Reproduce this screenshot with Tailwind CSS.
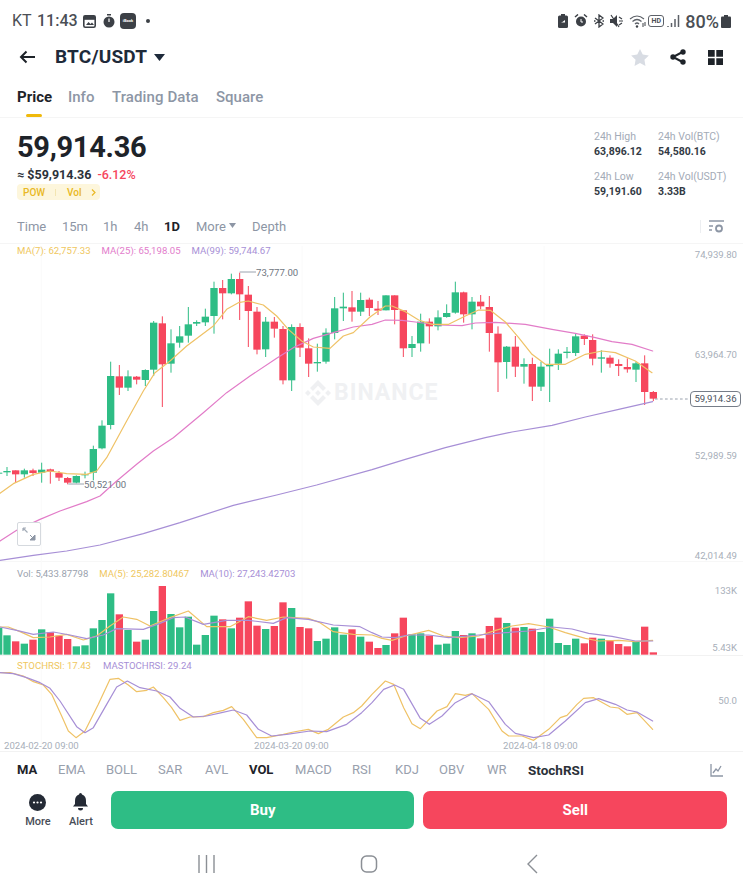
<!DOCTYPE html>
<html lang="en">
<head>
    <meta charset="UTF-8">
    <meta name="viewport" content="width=device-width, initial-scale=1.0">
    <title>BTC/USDT</title>
    <script src="https://cdn.jsdelivr.net/npm/@tailwindcss/browser@4"></script>
</head>
<body class="bg-white text-[#1e2329] font-['Roboto',sans-serif] w-[743px] h-[892px] overflow-hidden">

    <!-- status bar -->
    <div class="h-[42px] flex items-center justify-between pl-[12px] pr-[12px] text-[#4b4f55]">
        <div class="flex items-center">
            <span class="text-[16px] w-[25px]">KT</span>
            <span class="text-[16px] font-medium w-[46px]">11:43</span>
            <svg class="w-[13px] h-[13px]" viewBox="0 0 13 13"><rect x="0.8" y="0.8" width="11.4" height="11.4" rx="1.5" fill="none" stroke="#3c4046" stroke-width="1.6"/><rect x="0.8" y="0.8" width="11.4" height="4" fill="#3c4046"/><path d="M3 10l2.5-3 2 2 1.5-1.5 2 2.5z" fill="#3c4046"/></svg>
            <svg class="w-[12px] h-[14px] ml-[7px]" viewBox="0 0 12 14"><rect x="4" y="0" width="4" height="1.5" fill="#3c4046"/><circle cx="6" cy="8" r="5.5" fill="#3c4046"/><path d="M6 8V4.5" stroke="#fff" stroke-width="1.2"/></svg>
            <span class="ml-[5px] w-[16px] h-[16px] rounded-[4px] bg-[#3c4046] text-white text-[4px] font-bold flex items-center justify-center">iBook</span>
            <span class="ml-[10px] w-[4px] h-[4px] rounded-full bg-[#3c4046]"></span>
        </div>
        <div class="flex items-center">
            <svg class="w-[10px] h-[14px]" viewBox="0 0 10 14"><rect x="3" y="0" width="4" height="2" fill="#3c4046"/><rect x="0" y="1.5" width="10" height="12.5" rx="1.5" fill="#3c4046"/><path d="M3 9l4-3v2.5H3z" fill="#fff"/></svg>
            <svg class="w-[14px] h-[14px] ml-[6px]" viewBox="0 0 14 14"><circle cx="7" cy="7.5" r="5" fill="#3c4046"/><path d="M1 3l3-2.5M13 3l-3-2.5" stroke="#3c4046" stroke-width="1.5"/><path d="M7 5v3h2" stroke="#fff" stroke-width="1" fill="none"/></svg>
            <svg class="w-[10px] h-[14px] ml-[6px]" viewBox="0 0 10 14"><path d="M1 4l8 6-4 3V1l4 3-8 6M0 7h1.5M8.5 7H10" stroke="#3c4046" stroke-width="1.3" fill="none"/></svg>
            <svg class="w-[13px] h-[14px] ml-[6px]" viewBox="0 0 13 14"><path d="M0 5h3l4-4v12l-4-4H0z" fill="#3c4046"/><path d="M9 3l3 2M9 7h4M9 11l3-2M1 1l8 12" stroke="#3c4046" stroke-width="1.2"/></svg>
            <svg class="w-[18px] h-[14px] ml-[6px]" viewBox="0 0 18 14"><path d="M1 5q7-6 14 0M3.5 7.5q4.500-4 9 0M6 10q2-2 4 0" stroke="#5d6168" stroke-width="1.2" fill="none"/><circle cx="8" cy="12.500" r="1.200" fill="#3c4046"/><path d="M14 9v4M16 8v4" stroke="#3c4046"/></svg>
            <span class="ml-[1px] w-[16px] h-[12px] border border-[#5d6168] rounded-[3px] text-[7px] font-bold leading-[10px] text-center text-[#4b4f55]">HD</span>
            <svg class="w-[13px] h-[14px] ml-[3px]" viewBox="0 0 13 14"><path d="M1 13v-1M4.500 13V9M8 13V5M11.500 13V1" stroke="#5d6168" stroke-width="1.500"/></svg>
            <span class="text-[18px] font-medium ml-[5px]">80%</span>
            <svg class="w-[10px] h-[13px] ml-[2px]" viewBox="0 0 10 13"><rect x="3" y="0" width="4" height="2" fill="#3c4046"/><rect x="0" y="1.500" width="10" height="11.500" rx="1" fill="#3c4046"/></svg>
        </div>
    </div>

    <!-- header -->
    <div class="h-[30px] flex items-center pl-[19px] pr-[20px]">
        <svg class="w-[17px] h-[14px]" viewBox="0 0 17 14"><path d="M16 7H2M7.500 1.500L2 7l5.500 5.500" fill="none" stroke="#1e2329" stroke-width="2"/></svg>
        <span class="ml-[19px] text-[19px] font-bold text-[#1e2a3a] tracking-[0.2px]">BTC/USDT</span>
        <svg class="ml-[7px] w-[11px] h-[7px]" viewBox="0 0 11 7"><path d="M0 0h11L5.500 7z" fill="#1e2a3a"/></svg>
        <div class="ml-auto flex items-center">
            <svg class="w-[18px] h-[17px]" viewBox="0 0 24 23"><path d="M12 0l3.700 7.600 8.300 1.200-6 5.900 1.400 8.300L12 19.100 4.600 23 6 14.700 0 8.800l8.300-1.200z" fill="#d8dce3"/></svg>
            <svg class="ml-[21px] w-[16px] h-[16px]" viewBox="0 0 16 16"><path d="M12.500 3L3 8l9.500 5" fill="none" stroke="#1e2329" stroke-width="2"/><circle cx="13" cy="3" r="2.700" fill="#1e2329"/><circle cx="3" cy="8" r="2.700" fill="#1e2329"/><circle cx="13" cy="13" r="2.700" fill="#1e2329"/></svg>
            <svg class="ml-[22px] w-[15px] h-[15px]" viewBox="0 0 15 15"><path d="M0 0h6.700v6.700H0zM8.300 0H15v6.700H8.300zM0 8.300h6.700V15H0zM8.300 8.300H15V15H8.300z" fill="#1e2329"/></svg>
        </div>
    </div>

    <!-- tabs -->
    <div class="h-[46px] border-b border-[#f5f5f5] relative flex items-start pt-[14px] pl-[17px] text-[15px] font-medium text-[#8d96a5]">
        <span class="text-[#1e2329] font-bold w-[51px]">Price</span>
        <span class="w-[44px]">Info</span>
        <span class="w-[104px] tracking-[0.1px]">Trading Data</span>
        <span>Square</span>
        <span class="absolute left-[26px] bottom-0 w-[16px] h-[3px] rounded-sm bg-[#f0b90b]"></span>
    </div>

    <!-- price summary -->
    <div class="h-[92px] flex justify-between">
        <div class="pl-[17px] pt-[10px]">
            <div class="text-[29px] leading-[38px] font-bold tracking-[-0.3px]">59,914.36</div>
            <div class="mt-[1px] flex items-center text-[12.500px] leading-[16px] font-bold">
                <span class="text-[#2b3139]">≈ $59,914.36</span>
                <span class="ml-[6px] text-[#f6465d] font-medium">-6.12%</span>
            </div>
            <div class="mt-[1px] w-[83px] h-[16px] bg-[#fdf6dc] rounded-sm flex items-center text-[10px] text-[#e9b824] font-medium pl-[6px]">
                <span class="w-[24px]">POW</span>
                <span class="w-[1px] h-[7px] bg-[#f3e5b0] ml-[8px]"></span>
                <span class="ml-[11px]">Vol</span>
                <svg class="ml-[10px] w-[5px] h-[7px]" viewBox="0 0 5 7"><path d="M1 .5l3 3-3 3" fill="none" stroke="#e9b824" stroke-width="1.200"/></svg>
            </div>
        </div>
        <div class="flex pt-[11px] text-[10.500px] leading-[15px]">
            <div class="w-[64px]">
                <div class="text-[#a3abb7]">24h High</div>
                <div class="font-bold text-[#333a44]">63,896.12</div>
                <div class="mt-[10px] text-[#a3abb7]">24h Low</div>
                <div class="font-bold text-[#333a44]">59,191.60</div>
            </div>
            <div class="w-[85px]">
                <div class="text-[#a3abb7]">24h Vol(BTC)</div>
                <div class="font-bold text-[#333a44]">54,580.16</div>
                <div class="mt-[10px] text-[#a3abb7]">24h Vol(USDT)</div>
                <div class="font-bold text-[#333a44]">3.33B</div>
            </div>
        </div>
    </div>

    <!-- time frames -->
    <div class="h-[34px] flex items-center pl-[17px] pr-[19px] text-[13px] text-[#8d96a5] border-b border-[#f5f5f5]">
        <span class="w-[45px]">Time</span>
        <span class="w-[41px]">15m</span>
        <span class="w-[31px]">1h</span>
        <span class="w-[30px]">4h</span>
        <span class="w-[32px] font-bold text-[#1e2329]">1D</span>
        <span>More</span>
        <svg class="ml-[3px] w-[7px] h-[5px] mb-[3px]" viewBox="0 0 7 5"><path d="M0 0h7L3.500 5z" fill="#8d96a5"/></svg>
        <span class="ml-[16px]">Depth</span>
        <span class="ml-auto w-[1px] h-[13px] bg-[#eceef1]"></span>
        <svg class="ml-[8px] w-[15px] h-[14px]" viewBox="0 0 15 14"><path d="M0 1h15M0 6h4M0 10h3" stroke="#8d96a5" stroke-width="1.300"/><circle cx="10" cy="8.500" r="3" fill="none" stroke="#8d96a5" stroke-width="1.800"/></svg>
    </div>

    <!-- price pane -->
    <div class="relative h-[317px] text-[9.600px]">
        <svg id="pricePane" class="absolute left-0 top-[-3px] w-[743px] h-[320px]" viewBox="0 0 2229 960"></svg>
        <div class="absolute left-[17px] top-[1px] flex gap-[11px] leading-[12px]">
            <span class="text-[#efc75e]">MA(7): 62,757.33</span>
            <span class="text-[#e27ccb]">MA(25): 65,198.05</span>
            <span class="text-[#a78fd6]">MA(99): 59,744.67</span>
        </div>
        <!-- watermark -->
        <div class="absolute left-[305px] top-[136px] flex items-center text-[#f0f1f3]">
            <svg class="w-[26px] h-[26px]" viewBox="0 0 24 24"><path fill="#eff0f2" d="M16.624 13.920l2.718 2.715-7.353 7.353-7.353-7.352 2.718-2.716 4.635 4.659 4.636-4.659zm4.637-4.637L24 12l-2.715 2.716L18.568 12l2.693-2.717zm-9.272.001l2.716 2.692-2.716 2.717L9.272 12l2.717-2.716zm-9.272-.001L5.409 12l-2.691 2.692L0 12l2.717-2.717zM11.989.012l7.353 7.329-2.718 2.715-4.635-4.635-4.636 4.659-2.717-2.715 7.353-7.353z"/></svg>
            <span class="ml-[3px] text-[23px] leading-[26px] font-bold tracking-[1px]">BINANCE</span>
        </div>
        <div class="absolute right-[6px] top-[4px] text-[#a8afba]">74,939.80</div>
        <div class="absolute right-[6px] top-[104px] text-[#a8afba]">63,964.70</div>
        <div class="absolute right-[6px] top-[205px] text-[#a8afba]">52,989.59</div>
        <div class="absolute right-[6px] top-[305px] text-[#a8afba]">42,014.49</div>
        <div class="absolute left-[256px] top-[22px] text-[#6f7681]">73,777.00</div>
        <div class="absolute left-[84px] top-[234px] text-[#6f7681]">50,521.00</div>
        <div class="absolute left-[690px] top-[147px] w-[51px] h-[16px] border border-[#767d88] rounded-[4px] bg-white text-[#4c535e] flex items-center justify-center">59,914.36</div>
        <div class="absolute left-[17px] top-[278px] w-[24px] h-[24px] border border-[#d5d9de] rounded-[2px] bg-white flex items-center justify-center">
            <svg class="w-[16px] h-[16px]" viewBox="0 0 16 16"><path d="M2 2l4.500 4.500M2 2h3M2 2v3" fill="none" stroke="#a3abb7" stroke-width="1.200"/><path d="M14 14L9 9M14 14h-5l5-5z" fill="#8d96a5" stroke="#8d96a5" stroke-width="1"/></svg>
        </div>
    </div>

    <!-- volume pane -->
    <div class="relative h-[94px] border-t border-[#f7f7f7] text-[9.600px]">
        <svg id="volPane" class="absolute left-0 top-[-1px] w-[743px] h-[94px]" viewBox="0 0 2229 282"></svg>
        <div class="absolute left-[17px] top-[6px] flex gap-[11px] leading-[12px]">
            <span class="text-[#9aa2ae]">Vol: 5,433.87798</span>
            <span class="text-[#efc75e]">MA(5): 25,282.80467</span>
            <span class="text-[#a78fd6]">MA(10): 27,243.42703</span>
        </div>
        <div class="absolute right-[6px] top-[22px] text-[#a8afba]">133K</div>
        <div class="absolute right-[6px] top-[79px] text-[#a8afba]">5.43K</div>
    </div>

    <!-- stoch rsi pane -->
    <div class="relative h-[97px] border-t border-[#f2f2f2] border-b text-[9.600px]">
        <svg id="stochPane" class="absolute left-0 top-[-1px] w-[743px] h-[97px]" viewBox="0 282 2229 291"></svg>
        <div class="absolute left-[17px] top-[4px] flex gap-[12px] leading-[12px]">
            <span class="text-[#efc75e]">STOCHRSI: 17.43</span>
            <span class="text-[#a78fd6]">MASTOCHRSI: 29.24</span>
        </div>
        <div class="absolute right-[6px] top-[38px] text-[#a8afba]">50.0</div>
        <div class="absolute left-[4px] top-[83px] text-[#a8afba]">2024-02-20 09:00</div>
        <div class="absolute left-[254px] top-[83px] text-[#a8afba]">2024-03-20 09:00</div>
        <div class="absolute left-[503px] top-[83px] text-[#a8afba]">2024-04-18 09:00</div>
    </div>

    <!-- indicators -->
    <div class="h-[36px] flex items-center pl-[17px] pr-[20px] text-[13px] text-[#98a0ad]">
        <span class="w-[41px] font-bold text-[#1e2329]">MA</span>
        <span class="w-[48px]">EMA</span>
        <span class="w-[52px]">BOLL</span>
        <span class="w-[47px]">SAR</span>
        <span class="w-[44px]">AVL</span>
        <span class="w-[46px] font-bold text-[#1e2329]">VOL</span>
        <span class="w-[57px]">MACD</span>
        <span class="w-[43px]">RSI</span>
        <span class="w-[44px]">KDJ</span>
        <span class="w-[48px]">OBV</span>
        <span class="w-[41px]">WR</span>
        <span class="font-bold text-[13.500px] text-[#2b3139]">StochRSI</span>
        <svg class="ml-auto w-[13px] h-[13px]" viewBox="0 0 13 13"><path d="M1 0v12h12" fill="none" stroke="#8d96a5" stroke-width="1.300"/><path d="M3 9l3-4 2 2 3-5" fill="none" stroke="#8d96a5" stroke-width="1.300"/></svg>
    </div>

    <!-- actions -->
    <div class="h-[38px] mt-[3px] flex pl-[25px] pr-[16px]">
        <div class="w-[26px] flex flex-col items-center">
            <svg class="w-[17px] h-[17px] mt-[3px]" viewBox="0 0 17 17"><circle cx="8.500" cy="8.500" r="8.500" fill="#242a35"/><circle cx="5" cy="8.500" r="1.100" fill="#fff"/><circle cx="8.500" cy="8.500" r="1.100" fill="#fff"/><circle cx="12" cy="8.500" r="1.100" fill="#fff"/></svg>
            <span class="mt-[4px] text-[11px] leading-[13px] text-[#474d57] font-medium">More</span>
        </div>
        <div class="w-[26px] ml-[17px] flex flex-col items-center">
            <svg class="w-[15px] h-[18px] mt-[2px]" viewBox="0 0 15 18"><path d="M7.500 0a1.500 1.500 0 011.500 1.500C12 2.300 13 5 13 8v3l2 2.500H0L2 11V8c0-3 1-5.700 4-6.500A1.500 1.500 0 017.500 0z" fill="#242a35"/><path d="M5 15h5a2.500 2.500 0 01-5 0z" fill="#242a35"/></svg>
            <span class="mt-[4px] text-[11px] leading-[13px] text-[#474d57] font-medium">Alert</span>
        </div>
        <button class="ml-[17px] w-[304px] h-[38px] rounded-[7px] bg-[#2ebd85] text-white text-[15px] font-bold">Buy</button>
        <button class="ml-[9px] w-[304px] h-[38px] rounded-[7px] bg-[#f6465d] text-white text-[15px] font-bold">Sell</button>
    </div>

    <!-- android nav -->
    <div class="relative h-[23px] mt-[26px]">
        <svg class="absolute left-[198px] top-0 w-[17px] h-[18px]" viewBox="0 0 17 18"><path d="M1 0v18M8.500 0v18M16 0v18" stroke="#8b8f95" stroke-width="1.400"/></svg>
        <svg class="absolute left-[360px] top-0 w-[18px] h-[18px]" viewBox="0 0 18 18"><rect x="1.500" y="1" width="15" height="16" rx="5" fill="none" stroke="#8b8f95" stroke-width="1.500"/></svg>
        <svg class="absolute left-[527px] top-[-1px] w-[11px] h-[20px]" viewBox="0 0 11 20"><path d="M10 1L1 10l9 9" fill="none" stroke="#8b8f95" stroke-width="1.400"/></svg>
    </div>

    <script>
        const GREEN = "#2ebd85", RED = "#f6465d";
        const YELLOW = "#efc266", PINK = "#e27cc8", PURPLE = "#a78fd6";

        // x, body top, body bottom, wick top, wick bottom, colour - all in 3x screenshot coords
        const g = GREEN, r = RED;
        const candles = [
            [-4,695,698,690,703,g],[21,690,694,678,705,g],[47,688,700,688,725,r],[73,688,700,683,710,g],[99,688,696,683,705,r],
            [125,686,695,665,725,g],[151,685,692,683,728,r],[177,696,710,690,720,r],[203,711,725,708,730,r],[229,705,725,703,727,g],
            [255,700,703,692,712,g],[280,624,695,614,718,g],[306,554,622,538,625,g],[332,405,552,362,565,g],[358,406,440,372,462,r],
            [384,406,440,388,450,g],[410,407,416,405,430,r],[436,387,417,385,435,g],[461,245,386,240,405,g],[487,247,370,226,498,r],
            [513,307,368,265,395,g],[539,286,305,255,320,g],[565,250,284,198,305,g],[590,243,248,238,255,g],[616,227,244,203,255,g],
            [642,141,225,122,278,g],[668,141,157,117,235,r],[694,114,157,98,160,g],[719,114,160,95,237,r],[745,161,210,135,318,r],
            [771,212,326,198,340,r],[797,242,325,228,348,g],[823,242,263,228,290,r],[849,264,418,255,430,r],[875,258,418,250,450,g],
            [900,258,320,247,348,r],[926,322,368,292,408,r],[952,363,367,308,392,g],[978,275,362,262,368,g],[1004,202,276,168,295,g],
            [1030,197,202,155,240,g],[1056,199,212,150,242,r],[1082,177,212,155,225,g],[1108,176,201,170,225,r],
            [1134,203,209,180,222,r],[1158,163,208,163,208,g],[1184,163,207,163,250,r],[1210,208,322,208,348,r],[1236,309,321,285,348,g],
            [1262,242,307,218,332,g],[1288,242,256,232,308,r],[1314,229,256,208,268,g],[1340,216,228,190,230,g],[1366,154,215,122,218,g],
            [1391,154,220,152,245,r],[1416,182,220,168,265,g],[1442,182,196,162,205,r],[1468,198,276,165,332,r],[1494,278,364,256,453,r],
            [1520,317,363,315,413,g],[1546,317,377,285,408,r],[1572,369,377,352,428,g],[1597,369,437,350,480,r],[1623,377,437,362,450,g],
            [1649,369,376,323,483,g],[1675,338,368,325,387,g],[1701,332,336,318,352,g],[1727,286,336,278,345,g],[1753,284,294,280,312,r],
            [1778,297,353,280,373,r],[1804,349,353,328,395,g],[1830,350,368,343,380,r],[1856,369,375,355,405,r],[1882,378,385,352,395,r],
            [1908,367,386,362,423,g],[1934,367,453,343,492,r],[1960,453,473,450,480,r]
        ];

        // x, top of bar, colour (baseline 281)
        const volumes = [
            [-4,200,g],[21,223,g],[47,241,r],[73,248,g],[99,236,r],[125,205,g],[151,214,r],[177,224,r],[203,234,r],[229,256,g],
            [255,253,g],[280,202,g],[306,177,g],[332,97,g],[358,160,r],[384,207,g],[410,242,r],[436,236,g],[461,150,g],[487,75,r],
            [513,159,g],[539,199,g],[565,167,g],[590,251,g],[616,222,g],[642,164,g],[668,175,r],[694,202,g],[719,170,r],[745,121,r],
            [771,194,r],[797,204,g],[823,195,r],[849,124,r],[875,141,g],[900,198,r],[926,202,r],[952,240,g],[978,233,g],[1004,199,g],
            [1030,221,g],[1056,205,r],[1082,227,g],[1108,242,r],[1134,261,r],[1158,252,g],[1184,217,r],[1210,170,r],[1236,220,g],
            [1262,217,g],[1288,224,r],[1314,251,g],[1340,248,g],[1366,210,g],[1391,222,r],[1416,217,g],[1442,232,r],[1468,195,r],
            [1494,170,r],[1520,186,g],[1546,200,r],[1572,198,g],[1597,203,r],[1623,213,g],[1649,173,g],[1675,246,g],[1701,252,g],
            [1727,233,g],[1753,247,r],[1778,230,r],[1804,233,g],[1830,238,r],[1856,249,r],[1882,256,r],[1908,240,g],[1934,197,r],[1960,274,r]
        ];

        const ma7 = "0,757 40,728 100,700 150,690 200,698 260,700 290,690 320,650 380,540 430,450 465,395 510,360 560,315 600,285 640,255 680,205 715,185 745,180 790,192 830,225 865,265 905,300 940,318 990,322 1030,285 1060,275 1110,228 1156,195 1176,195 1216,212 1256,237 1296,250 1346,250 1396,225 1436,207 1471,208 1516,243 1556,290 1596,340 1636,370 1696,370 1756,340 1806,330 1846,335 1906,360 1956,395";
        const ma25 = "0,900 50,868 120,835 180,810 260,782 300,765 350,720 410,670 460,630 520,590 610,515 680,455 750,405 830,352 880,320 940,292 1000,275 1060,258 1116,250 1156,237 1206,238 1246,243 1316,252 1386,254 1426,246 1486,244 1576,250 1656,265 1726,277 1786,290 1836,302 1896,310 1958,330";
        const ma99 = "0,958 100,943 200,930 300,912 430,878 540,845 700,793 830,762 950,732 1116,686 1216,655 1336,620 1456,590 1536,573 1656,553 1756,528 1856,505 1958,482";

        const volMa5 = "0,198 25,198 60,212 100,230 150,228 200,220 250,237 290,225 330,195 370,168 410,175 450,195 510,170 565,150 620,197 690,197 745,167 800,178 850,168 925,172 960,185 1000,212 1060,220 1116,222 1146,232 1176,238 1216,225 1286,208 1331,225 1376,230 1436,225 1486,208 1536,195 1586,188 1646,198 1696,215 1756,232 1796,240 1856,238 1906,242 1958,238";
        const volMa10 = "0,198 50,208 100,220 160,213 210,222 260,233 310,222 350,203 430,205 480,187 520,170 555,168 610,190 680,178 745,178 820,187 860,170 925,175 1000,192 1080,197 1116,215 1146,228 1186,230 1226,222 1286,222 1346,230 1436,222 1516,215 1586,210 1656,198 1716,204 1766,217 1836,226 1906,240 1958,240";

        const stoch = "0,335 30,335 70,345 100,362 130,372 155,400 185,465 205,510 228,530 255,510 295,430 330,355 355,352 385,372 410,392 440,388 460,378 490,410 515,440 540,478 570,468 610,467 640,455 670,448 695,437 730,475 770,530 800,530 850,520 880,513 925,505 955,518 985,505 1030,468 1060,455 1085,435 1116,400 1156,360 1181,370 1211,440 1236,488 1261,503 1311,450 1341,437 1366,398 1396,403 1416,398 1466,445 1506,510 1526,525 1566,525 1601,538 1646,505 1681,470 1701,463 1731,430 1751,412 1781,410 1831,438 1856,441 1881,460 1911,455 1958,505";
        const maStoch = "0,335 40,338 80,350 120,365 150,382 180,420 230,497 255,515 280,500 320,430 350,378 382,360 420,380 470,390 510,408 540,442 580,468 620,465 665,455 700,447 740,462 775,505 815,525 860,520 930,510 980,512 1040,490 1085,455 1116,425 1151,385 1184,372 1211,385 1261,472 1288,490 1326,465 1366,425 1416,398 1466,422 1516,490 1546,517 1601,530 1646,522 1696,480 1756,425 1796,413 1846,430 1881,447 1911,453 1958,480";

        function line(points, color) {
            return `<polyline points="${points}" fill="none" stroke="${color}" stroke-width="3.600" stroke-linejoin="round" stroke-linecap="round"/>`;
        }

        function grid(y1, y2) {
            return [124, 906, 1632].map(x => `<line x1="${x}" x2="${x}" y1="${y1}" y2="${y2}" stroke="#fafafa" stroke-width="3"/>`).join("");
        }

        let price = grid(15, 960);
        candles.forEach(([x, top, bottom, wickTop, wickBottom, color]) => {
            price += `<rect x="${x - 1.5}" y="${wickTop}" width="3" height="${wickBottom - wickTop}" fill="${color}"/>`;
            price += `<rect x="${x - 11}" y="${top}" width="22" height="${bottom - top}" fill="${color}"/>`;
        });
        price += line(ma25, PINK) + line(ma7, YELLOW) + line(ma99, PURPLE);
        // high / low markers and last price guide
        price += `<path d="M719 93H768M205 729H252" stroke="#9aa2ae" stroke-width="3" fill="none"/>`;
        price += `<path d="M1965 474H2070" stroke="#9aa2ae" stroke-width="3" stroke-dasharray="8 7" fill="none"/>`;
        document.getElementById("pricePane").innerHTML = price;

        let vol = grid(0, 282);
        volumes.forEach(([x, top, color]) => {
            vol += `<rect x="${x - 11}" y="${top}" width="22" height="${281 - top}" fill="${color}"/>`;
        });
        vol += line(volMa5, YELLOW) + line(volMa10, PURPLE);
        document.getElementById("volPane").innerHTML = vol;

        document.getElementById("stochPane").innerHTML = grid(282, 573) + line(stoch, YELLOW) + line(maStoch, PURPLE);
    </script>

</body>
</html>
